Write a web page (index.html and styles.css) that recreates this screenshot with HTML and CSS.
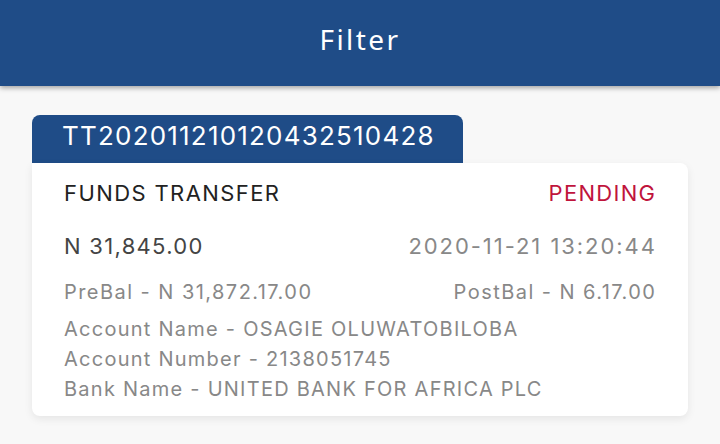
FILE: index.html
```html
<!DOCTYPE html>
<html>
<head>
<meta charset="utf-8">
<link rel="stylesheet" href="styles.css">
</head>
<body>
<header class="appbar"><h1 class="title">Filter</h1></header>
<main class="content">
  <div class="tab">TT202011210120432510428</div>
  <section class="card">
    <div class="row row-top">
      <span class="type">FUNDS TRANSFER</span>
      <span class="status">PENDING</span>
    </div>
    <div class="row row-amount">
      <span class="amount">N 31,845.00</span>
      <span class="date">2020-11-21 13:20:44</span>
    </div>
    <div class="row row-bal">
      <span>PreBal - N 31,872.17.00</span>
      <span class="post">PostBal - N 6.17.00</span>
    </div>
    <div class="details">
      <div>Account Name - OSAGIE OLUWATOBILOBA</div>
      <div>Account Number - 2138051745</div>
      <div>Bank Name - UNITED BANK FOR AFRICA PLC</div>
    </div>
  </section>
</main>
</body>
</html>
```
FILE: styles.css
```css
* { box-sizing: border-box; }
html, body { margin: 0; padding: 0; }
body {
  width: 720px;
  height: 444px;
  overflow: hidden;
  background: #f8f8f8;
  font-family: Inter, "Noto Sans", sans-serif;
}
.appbar {
  height: 86px;
  background: #1f4c87;
  display: flex;
  align-items: center;
  justify-content: center;
  box-shadow: 0 2px 5px rgba(0,0,0,0.35);
  position: relative;
  z-index: 1;
}
.title {
  margin: 0 0 8px 0;
  color: #fff;
  font-family: "Noto Sans", sans-serif;
  font-weight: 400;
  font-size: 28px;
  line-height: 38px;
  letter-spacing: 2.4px;
}
.content {
  padding: 29px 32px 0 32px;
}
.tab {
  width: 431px;
  height: 48px;
  background: #1f4c87;
  color: #fff;
  border-radius: 8px 8px 0 0;
  padding-left: 30px;
  font-size: 26px;
  line-height: 42px;
  letter-spacing: 1.2px;
}
.card {
  background: #fff;
  border-radius: 0 8px 8px 8px;
  box-shadow: 0 3px 8px rgba(0,0,0,0.08);
  padding: 15px 33px 12px 32px;
  width: 656px;
}
.row {
  display: flex;
  justify-content: space-between;
  align-items: baseline;
}
.row-top {
  font-size: 22px;
  line-height: 30px;
}
.type { color: #222; letter-spacing: 1.4px; }
.status { color: #c0143c; letter-spacing: 1.3px; margin-right: -1.3px; }
.row-amount {
  margin-top: 23px;
  font-size: 22px;
  line-height: 30px;
}
.amount { color: #444; letter-spacing: 1.3px; }
.date { color: #888; letter-spacing: 1.95px; margin-right: -1.95px; }
.row-bal {
  margin-top: 16px;
  font-size: 20px;
  line-height: 30px;
  color: #888;
  letter-spacing: 1.45px;
}
.post { margin-right: -1.45px; }
.details {
  margin-top: 7px;
  font-size: 20px;
  color: #888;
  line-height: 30px;
  letter-spacing: 1.25px;
}
```
